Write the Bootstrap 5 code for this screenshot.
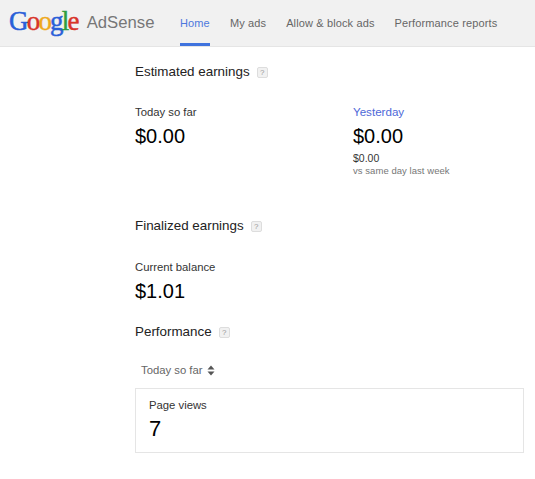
<!doctype html>
<html lang="en"><head><meta charset="utf-8"><title>AdSense</title>
<link href="https://cdn.jsdelivr.net/npm/bootstrap@5.3.0/dist/css/bootstrap.min.css" rel="stylesheet">
<style>
html,body{height:479px;overflow:hidden}
body{font-family:"Liberation Sans",Arial,sans-serif;font-size:12px;color:#222;background:#fff}
.topbar{height:47px;background:#f1f1f1;border-bottom:1px solid #e5e5e5;padding-left:10px}
.brand{width:170px;align-items:center;margin-top:-1px}
.glogo{font-family:"Liberation Serif",serif;font-size:27px;font-weight:400;-webkit-text-stroke:.5px;letter-spacing:-1.8px;line-height:1;margin-top:-2px;margin-left:-1px}
.glogo .b{color:#2a5fd8}.glogo .r{color:#d8342a}.glogo .y{color:#eea91c}.glogo .g{color:#2f9e3f}
.adname{font-size:16.7px;color:#777;margin-left:9px}
.tabs{gap:20px}
.tabitem{height:46px;line-height:46px;font-size:11px;color:#666;text-decoration:none;letter-spacing:.13px}
.tabitem.on{color:#4d78dd;box-shadow:inset 0 -3px 0 #3f73de}
.mainpane{margin-left:135px;width:389px}
.sechead{font-size:13.4px;color:#222;line-height:16px;display:flex;align-items:center;gap:7px}
.hint{width:11px;height:11px;border:1px solid #ddd;border-radius:2px;background:#f1f1f1;color:#999;font-size:8px;line-height:10px;text-align:center;display:inline-block;margin-top:1px}
.lbl{font-size:11.3px;line-height:14px;color:#333}
.amount{font-size:20px;line-height:24px;color:#000;margin-top:5px}
.yest{color:#4d68d8;font-size:11.6px}
.subamt{font-size:10.5px;line-height:12px;color:#333;margin-top:4px}
.subnote{font-size:9.5px;line-height:13px;color:#777;letter-spacing:.05px}
.rightcol{width:171px}
.rangepick{font-size:11.3px;color:#666;line-height:14px;padding-left:6px;gap:4px}
.statbox{height:65px;border:1px solid #e5e5e5;padding:9px 13px}
.est{margin-top:17px}
.estrow{margin-top:25px;height:88px}
.fin{margin-top:25px}
.bal{margin-top:26px}
.perf{margin-top:21px}
.rangewrap{margin-top:23px;margin-bottom:11px}
.stat7{font-size:22px;line-height:26px;margin-top:4px;color:#000}
</style></head>
<body>
<nav class="topbar d-flex">
  <div class="brand d-flex"><span class="glogo"><span class="b">G</span><span class="r">o</span><span class="y">o</span><span class="b">g</span><span class="g">l</span><span class="r">e</span></span><span class="adname">AdSense</span></div>
  <div class="tabs d-flex">
    <a class="tabitem on" href="#">Home</a>
    <a class="tabitem" href="#">My ads</a>
    <a class="tabitem" href="#">Allow &amp; block ads</a>
    <a class="tabitem" href="#">Performance reports</a>
  </div>
</nav>
<main class="mainpane">
  <div class="sechead est">Estimated earnings <span class="hint">?</span></div>
  <div class="estrow d-flex justify-content-between">
    <div><div class="lbl">Today so far</div><div class="amount">$0.00</div></div>
    <div class="rightcol"><div class="lbl yest">Yesterday</div><div class="amount">$0.00</div><div class="subamt">$0.00</div><div class="subnote">vs same day last week</div></div>
  </div>
  <div class="sechead fin">Finalized earnings <span class="hint">?</span></div>
  <div class="bal"><div class="lbl">Current balance</div><div class="amount">$1.01</div></div>
  <div class="sechead perf">Performance <span class="hint">?</span></div>
  <div class="rangewrap"><div class="rangepick d-flex align-items-center">Today so far
    <svg width="8" height="11" viewBox="0 0 8 11" aria-hidden="true"><path d="M4 0.5 7.5 4.5H.5zM4 10.5 .5 6.5H7.5z" fill="#555"/></svg></div></div>
  <div class="statbox"><div class="lbl">Page views</div><div class="stat7">7</div></div>
</main>
<script src="https://cdn.jsdelivr.net/npm/bootstrap@5.3.0/dist/js/bootstrap.bundle.min.js"></script>
</body></html>
